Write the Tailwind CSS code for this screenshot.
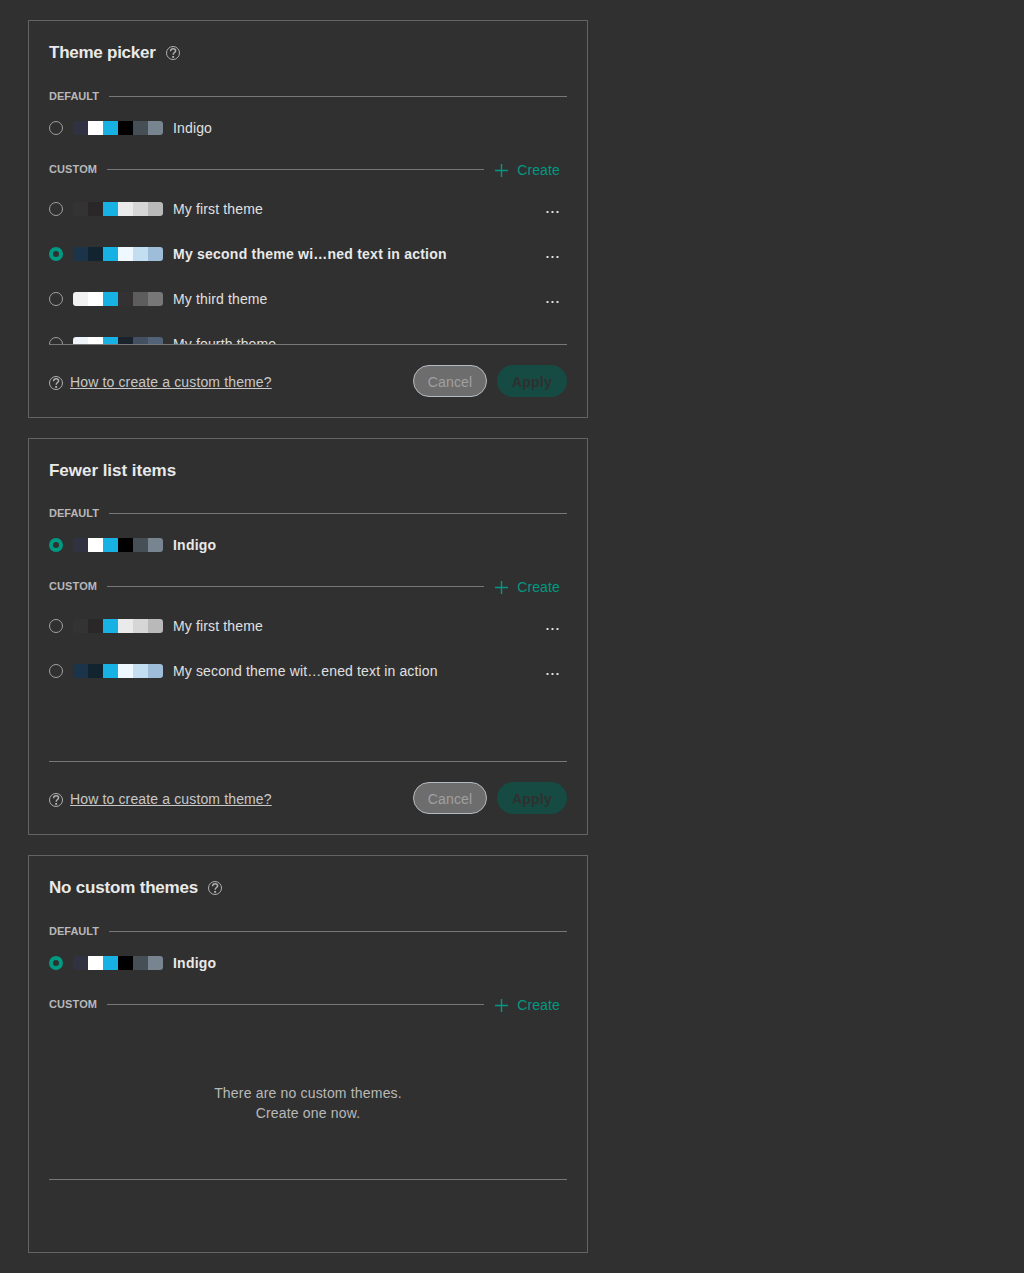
<!DOCTYPE html>
<html lang="en">
<head>
<meta charset="utf-8">
<title>Theme picker</title>
<script src="https://cdn.jsdelivr.net/npm/@tailwindcss/browser@4"></script>
</head>
<body class="bg-[#303030] font-['Liberation_Sans',Arial,sans-serif] text-sm tracking-[0.14px] text-[#e0e0e0]">
<svg class="hidden">
  <symbol id="help" viewBox="0 0 14 14"><circle cx="7" cy="7" r="6.5" fill="none" stroke="currentColor" stroke-width="1"/><path d="M4.600 5.300C4.600 3.500 5.600 2.800 7.100 2.800c1.500 0 2.500.8 2.500 2C9.600 6.500 7.200 6.500 7.200 8.700" fill="none" stroke="currentColor" stroke-width="1.500"/><path d="M6.200 10h1.900v1.800H6.200z" fill="currentColor"/></symbol>
  <symbol id="plus" viewBox="0 0 13 13"><path d="M6.500 0v13M0 6.500h13" fill="none" stroke="currentColor" stroke-width="1.400"/></symbol>
</svg>
<main id="app" class="flex w-[588px] flex-col gap-5 pt-5 pl-7"></main>
<script>
const palettes = {
  indigo: ['#303241', '#ffffff', '#17b2e3', '#000000', '#474f56', '#788591'],
  first: ['#333333', '#292728', '#17b2e3', '#eaeaea', '#d6d6d6', '#b9b9b9'],
  second: ['#1c3449', '#12242f', '#17b2e3', '#f0f8ff', '#c4def1', '#9dbdd9'],
  third: ['#f2f2f2', '#ffffff', '#17b2e3', '#333132', '#5d5d5d', '#777777'],
  fourth: ['#eff3fa', '#ffffff', '#17b2e3', '#1a232c', '#425062', '#526377'],
};
const help = '<svg class="size-3.5 shrink-0 text-[#b0b0b0]"><use href="#help"/></svg>';
const dot = '<i class="h-0.5 w-[3px] border-x border-[#858585] bg-[#e0e0e0]"></i>';
const item = (palette, name, active) => `
  <span class="${active ? 'size-3.5 rounded-full border-4 border-[#009982]' : 'size-3.5 rounded-full border border-[#a0a0a0]'}"></span>
  <span class="ml-2.5 flex h-3.5 w-[90px] overflow-hidden rounded-[3px]">${palettes[palette].map(c => `<i class="w-[15px]" style="background:${c}"></i>`).join('')}</span>
  <span class="${active ? 'ml-2.5 flex-1 font-bold leading-4 tracking-[0.23px] text-[#e9e9e9]' : 'ml-2.5 flex-1 leading-4'}">${name}</span>`;
const row = ([palette, name, active]) => `
  <li class="flex h-[45px] shrink-0 items-center">${item(palette, name, active)}
    <button class="mt-1.5 mr-2 flex gap-0.5">${dot}${dot}${dot}</button>
  </li>`;
const card = ({ title, tracking, size, titleHelp, defaultActive, rows, footer }) => `
  <section class="${size} flex flex-col border border-[#636363] px-5 pt-5">
    <h2 class="${tracking} flex h-6 shrink-0 items-center gap-2.5 text-[17px] font-bold text-[#e9e9e9]">${title}${titleHelp ? help : ''}</h2>
    <div class="${size === 'h-[397px]' ? 'mt-6' : 'mt-[25px]'} flex h-3 items-center gap-2.5 text-[11px] leading-3 font-bold tracking-normal text-[#b8b8b8]">DEFAULT<span class="h-px flex-1 bg-[#777]"></span></div>
    <div class="mt-[19px] flex h-3.5 items-center">${item('indigo', 'Indigo', defaultActive)}</div>
    <div class="mt-7 flex h-3 items-center text-[11px] leading-3 font-bold tracking-[0.1px] text-[#b8b8b8]">CUSTOM<span class="mr-[11px] ml-2.5 h-px flex-1 bg-[#777]"></span>
      <button class="mt-0.5 mr-[7px] flex items-center gap-[9px] text-sm font-normal tracking-[0.14px] text-[#009982]"><svg class="size-[13px]"><use href="#plus"/></svg>Create</button></div>
    ${rows.length
      ? `<ul class="mt-[11px] flex h-[158px] flex-col overflow-hidden">${rows.map(row).join('')}</ul>`
      : `<p class="mt-[11px] flex h-[158px] items-center justify-center pt-1.5 text-center leading-5 tracking-[0.18px] text-[#b8b8b8]">There are no custom themes.<br>Create one now.</p>`}
    <div class="h-px shrink-0 bg-[#777]"></div>
    ${footer ? `<footer class="mt-5 flex h-8 items-center">
      <span class="mt-1">${help}</span><a class="mt-0.5 ml-[7px] flex-1 text-[#c8c8c8] underline">How to create a custom theme?</a>
      <button class="h-8 w-[74px] rounded-full border border-[#b3bac1] bg-[#6d6d6d] pt-0.5 text-[#a0a0a0]">Cancel</button>
      <button class="ml-2.5 h-8 w-[70px] rounded-full bg-[#154b42] pt-0.5 font-bold tracking-[0.22px] text-[#303030]">Apply</button>
    </footer>` : ''}
  </section>`;
document.getElementById('app').innerHTML = [
  { title: 'Theme picker', tracking: 'tracking-[-0.25px]', size: 'h-[398px]', titleHelp: true, footer: true, rows: [['first', 'My first theme'], ['second', 'My second theme wi…ned text in action', true], ['third', 'My third theme'], ['fourth', 'My fourth theme']] },
  { title: 'Fewer list items', tracking: 'tracking-[-0.03px]', size: 'h-[397px]', defaultActive: true, footer: true, rows: [['first', 'My first theme'], ['second', 'My second theme wit…ened text in action']] },
  { title: 'No custom themes', tracking: 'tracking-[-0.19px]', size: 'h-[398px]', titleHelp: true, defaultActive: true, rows: [] },
].map(card).join('');
</script>
</body>
</html>
